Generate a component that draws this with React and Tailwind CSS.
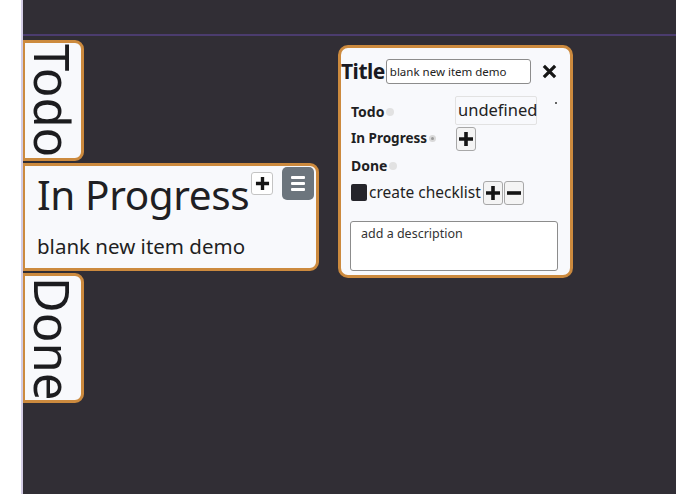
import React from "react";

function Plus({ size = 14, w = 3.4 }) {
  return (
    <svg width={size} height={size} viewBox="0 0 16 16">
      <path d="M8 1v14M1 8h14" stroke="#151515" strokeWidth={w} />
    </svg>
  );
}

function Minus({ size = 14, w = 3.4 }) {
  return (
    <svg width={size} height={size} viewBox="0 0 16 16">
      <path d="M1 8h14" stroke="#151515" strokeWidth={w} />
    </svg>
  );
}

function VerticalCard({ label, h }) {
  return (
    <div
      className={`w-[61px] ${h} bg-[#f8f9fc] border-[3px] border-l-2 border-[#cc8a3e] rounded-r-[9px] flex justify-center pt-[1px]`}
    >
      <span className="[writing-mode:vertical-rl] text-[49px] leading-[52px] text-[#1c1c1f]">
        {label}
      </span>
    </div>
  );
}

function Dot({ checked }) {
  return checked ? (
    <span className="ml-[2px] w-[7px] h-[7px] rounded-full bg-[#d9d9d9] flex items-center justify-center">
      <span className="w-[3px] h-[3px] rounded-full bg-[#9a9a9a]" />
    </span>
  ) : (
    <span className="ml-[2px] w-[8px] h-[8px] rounded-full bg-[#e2e2e2]" />
  );
}

export default function App() {
  return (
    <div className="w-[695px] h-[494px] flex bg-white overflow-hidden font-['Noto_Sans',sans-serif] text-[#1f1f23]">
      <div className="w-[23px] shrink-0 bg-white border-r-2 border-[#d3cce4]" />
      <div className="w-[653px] shrink-0 bg-[#312e35] flex flex-col">
        <div className="h-[36px] shrink-0 border-b-2 border-[#4b3c6e]" />
        <div className="flex items-start">
          <div className="flex flex-col gap-[2px] pt-[4px] w-[296px] shrink-0">
            <VerticalCard label="Todo" h="h-[121px]" />
            <div className="h-[108px] w-[296px] bg-[#f8f9fc] border-[3px] border-l-2 border-[#cc8a3e] rounded-r-[9px] pl-[12px] pr-[2px] pt-[1px] flex flex-col">
              <div className="flex items-start">
                <span className="mt-[8px] text-[40.5px] leading-none tracking-[-0.4px] whitespace-nowrap">
                  In Progress
                </span>
                <span className="mt-[5px] ml-[2px] w-[22px] h-[23px] border border-[#c4c4c4] rounded-[3px] bg-white flex items-center justify-center">
                  <Plus size={15} w={3.6} />
                </span>
                <span className="ml-[9px] w-[33px] h-[33px] rounded-[5px] bg-[#6c757d] flex flex-col items-center justify-center gap-[3px]">
                  <span className="w-[14px] h-[3px] bg-white rounded-[1px]" />
                  <span className="w-[14px] h-[3px] bg-white rounded-[1px]" />
                  <span className="w-[14px] h-[3px] bg-white rounded-[1px]" />
                </span>
              </div>
              <div className="mt-[20px] text-[20.5px] leading-none whitespace-nowrap">
                blank new item demo
              </div>
            </div>
            <VerticalCard label="Done" h="h-[130px]" />
          </div>

          <div className="ml-[19px] mt-[9px] w-[235px] h-[233px] shrink-0 bg-[#f8f9fc] border-[3px] border-[#cc8a3e] rounded-[10px] flex flex-col">
            <div className="mt-[10px] flex items-center h-[27px]">
              <span className="text-[21px] font-bold leading-none tracking-[-0.5px] text-[#1a1a22]">
                Title
              </span>
              <span className="ml-[1px] w-[145px] h-[25px] border border-[#8c8c8c] rounded-[3px] bg-white px-[3px] flex items-center text-[11.5px] text-[#222] whitespace-nowrap">
                blank new item demo
              </span>
              <span className="ml-[11px] flex items-center">
                <svg width="15" height="15" viewBox="0 0 16 16">
                  <path d="M2 2l12 12M14 2L2 14" stroke="#151515" strokeWidth="3.4" />
                </svg>
              </span>
            </div>

            <div className="mt-[11px] pl-[10px] flex items-start">
              <div className="w-[104px] pt-[2px] flex flex-col">
                <div className="h-[27px] flex items-center text-[14px] font-bold">
                  Todo
                  <Dot />
                </div>
                <div className="h-[27px] flex items-center text-[13.5px] font-bold whitespace-nowrap">
                  In Progress
                  <Dot checked />
                </div>
                <div className="h-[27px] flex items-center text-[14px] font-bold">
                  Done
                  <Dot />
                </div>
              </div>
              <div className="flex flex-col">
                <span className="w-[82px] h-[29px] border border-[#e2e2e2] rounded-[2px] flex items-center pl-[2px] text-[16.5px] text-[#222]">
                  undefined
                </span>
                <span className="mt-[2px] ml-[1px] w-[20px] h-[24px] border border-[#a8a8a8] rounded-[3px] bg-[#f4f4f4] flex items-center justify-center">
                  <Plus size={16} w={3.6} />
                </span>
              </div>
              <span className="ml-[18px] mt-[6px] w-[2px] h-[2px] rounded-full bg-[#333]" />
            </div>

            <div className="mt-[1px] pl-[10px] h-[25px] flex items-center">
              <span className="w-[16px] h-[17px] rounded-[2px] bg-[#25252b]" />
              <span className="ml-[2px] text-[15.5px] leading-none whitespace-nowrap">
                create checklist
              </span>
              <span className="ml-[2px] w-[20px] h-[24px] border border-[#a8a8a8] rounded-[3px] bg-[#f4f4f4] flex items-center justify-center">
                <Plus size={16} w={3.6} />
              </span>
              <span className="ml-[1px] w-[20px] h-[24px] border border-[#a8a8a8] rounded-[3px] bg-[#f4f4f4] flex items-center justify-center">
                <Minus size={16} w={3.6} />
              </span>
            </div>

            <div className="mt-[16px] ml-[9px] w-[208px] h-[50px] border border-[#8c8c8c] rounded-[3px] bg-white px-[10px] pt-[4px] text-[12.5px] text-[#333] leading-[16px]">
              add a description
            </div>
          </div>
        </div>
      </div>
      <div className="flex-1 bg-white" />
    </div>
  );
}
